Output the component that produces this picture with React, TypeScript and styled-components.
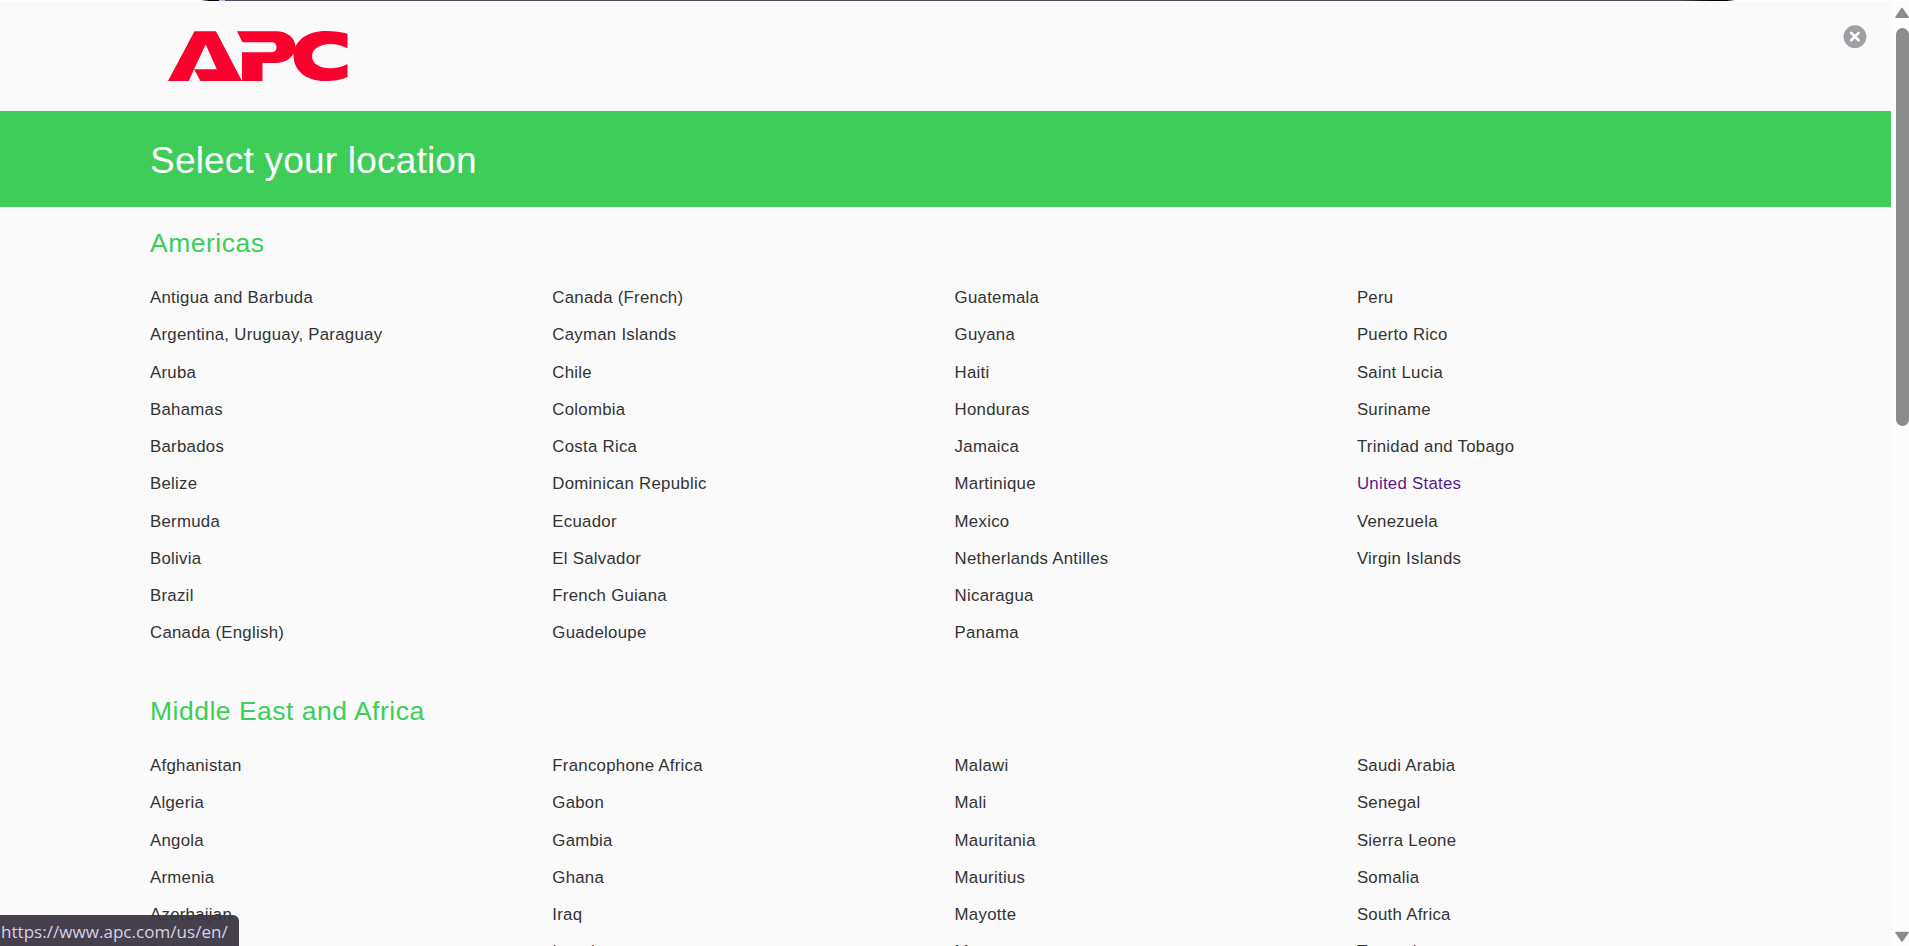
import React from "react";
import styled, { createGlobalStyle } from "styled-components";

const GlobalStyle = createGlobalStyle`
  * { box-sizing: border-box; }
  html, body { margin: 0; height: 100%; overflow: hidden; }
  body { background: #fafafa; font-family: "Liberation Sans", Arial, sans-serif; color: #333; }
`;

const Window = styled.div`
  position: relative;
  display: flex;
  height: 946px;
  overflow: hidden;
`;

const Page = styled.div`
  flex: 1;
  min-width: 0;
  overflow: hidden;
  background: #fafafa;
`;

const TopEdge = styled.div`
  position: absolute;
  top: 0;
  left: 0;
  width: 100%;
  height: 1px;
  background: linear-gradient(
    to right,
    #fff 201px, #000 209px, #000 219px, #cbb2f5 219px, #cbb2f5 225px,
    #51475a 225px, #51475a 1680px, #000 1712px, #000 1727px, #fff 1735px
  );
`;

const Header = styled.header`
  display: flex;
  justify-content: space-between;
  align-items: flex-start;
  height: 111px;
  padding: 25px 24px 0 168px;
`;

const Logo = styled.svg`
  display: block;
  margin-top: 6px;
`;

const CloseButton = styled.button`
  display: block;
  padding: 0;
  border: 0;
  background: none;
  line-height: 0;
`;

const Banner = styled.div`
  display: flex;
  align-items: center;
  height: 96px;
  padding: 3px 0 0 150px;
  background: #3dcd58;
`;

const Title = styled.h1`
  margin: 0;
  font-size: 37px;
  font-weight: 400;
  letter-spacing: 0.2px;
  color: #fff;
`;

const Region = styled.section`
  height: 468px;
  padding: 18px 0 0 150px;
`;

const RegionTitle = styled.h2`
  margin: 0 0 18px;
  height: 36px;
  line-height: 36px;
  font-size: 26.5px;
  font-weight: 400;
  letter-spacing: 0.5px;
  color: #3dcd58;
`;

const Columns = styled.div`
  display: grid;
  grid-template-columns: repeat(4, 402.3px);
`;

const CountryList = styled.ul`
  margin: 0;
  padding: 0;
  list-style: none;
`;

const Country = styled.li`
  height: 37.25px;
  line-height: 37.25px;
  white-space: nowrap;
`;

const CountryLink = styled.a<{ $visited?: boolean }>`
  font-size: 16.8px;
  letter-spacing: 0.28px;
  text-decoration: none;
  color: ${(p) => (p.$visited ? "#551a8b" : "#333")};
`;

const Scrollbar = styled.div`
  display: flex;
  flex-direction: column;
  align-items: flex-end;
  width: 18px;
  padding: 7px 0 3px;
  background: #fcfcfc;
`;

const Thumb = styled.div`
  width: 13px;
  height: 398px;
  margin: 9px 0 auto;
  border-radius: 7px;
  background: #8b8b8b;
`;

const StatusBar = styled.div`
  position: absolute;
  left: 0;
  bottom: 0;
  display: flex;
  align-items: center;
  width: 239px;
  height: 31px;
  padding: 2px 0 0 1px;
  border-top-right-radius: 6px;
  background: rgba(60, 54, 67, 0.95);
  font-family: "Open Sans", "Noto Sans", sans-serif;
  font-size: 17px;
  letter-spacing: 0.04px;
  color: #d9cfe8;
  white-space: nowrap;
`;

const regions = [
  {
    name: "Americas",
    columns: [
      ["Antigua and Barbuda", "Argentina, Uruguay, Paraguay", "Aruba", "Bahamas", "Barbados", "Belize", "Bermuda", "Bolivia", "Brazil", "Canada (English)"],
      ["Canada (French)", "Cayman Islands", "Chile", "Colombia", "Costa Rica", "Dominican Republic", "Ecuador", "El Salvador", "French Guiana", "Guadeloupe"],
      ["Guatemala", "Guyana", "Haiti", "Honduras", "Jamaica", "Martinique", "Mexico", "Netherlands Antilles", "Nicaragua", "Panama"],
      ["Peru", "Puerto Rico", "Saint Lucia", "Suriname", "Trinidad and Tobago", "United States", "Venezuela", "Virgin Islands"],
    ],
  },
  {
    name: "Middle East and Africa",
    columns: [
      ["Afghanistan", "Algeria", "Angola", "Armenia", "Azerbaijan", "Bahrain"],
      ["Francophone Africa", "Gabon", "Gambia", "Ghana", "Iraq", "Israel"],
      ["Malawi", "Mali", "Mauritania", "Mauritius", "Mayotte", "Morocco"],
      ["Saudi Arabia", "Senegal", "Sierra Leone", "Somalia", "South Africa", "Tanzania"],
    ],
  },
];

export default function App() {
  return (
    <Window>
      <GlobalStyle />
      <Page>
        <Header>
          <Logo width="180" height="50" viewBox="0 0 180 50" fill="#fa002d" aria-label="APC">
            <path fillRule="evenodd" d="M26.5 .3H48L74 50H32.5L26 38.2L20.8 50H0ZM37.7 13.5L26 38.2H48.8Z" />
            <path d="M69 .3H108C119 .3 126.5 6.5 127.3 14.5C127.7 25 119 32 107 32H94.5V50H74V21.2H103C107 21.2 108.5 19.5 108.5 16.3C108.5 13 107 11.3 103 11.3H74.5Z" />
            <path d="M179.5 2.8V17.3C174 14.5 168 13 162 13C152 13 144 18 144 25.3C144 33 152 37.2 162 37.2C168 37.2 174 36 179.5 33V46C173 49 166 50 157 50C138 50 125.5 39.5 125.5 24.5C125.5 10 139 0 158 0C166 0 173 .8 179.5 2.8Z" />
          </Logo>
          <CloseButton aria-label="Close">
            <svg width="24" height="24" viewBox="0 0 24 24">
              <circle cx="12" cy="11.7" r="11.4" fill="#9fa0a4" />
              <path d="M8.2 7.9L15.6 15.3M15.6 7.9L8.2 15.3" stroke="#fff" strokeWidth="2.7" strokeLinecap="round" />
            </svg>
          </CloseButton>
        </Header>
        <Banner>
          <Title>Select your location</Title>
        </Banner>
        {regions.map((region) => (
          <Region key={region.name}>
            <RegionTitle>{region.name}</RegionTitle>
            <Columns>
              {region.columns.map((column) => (
                <CountryList key={column[0]}>
                  {column.map((country) => (
                    <Country key={country}>
                      <CountryLink $visited={country === "United States"}>{country}</CountryLink>
                    </Country>
                  ))}
                </CountryList>
              ))}
            </Columns>
          </Region>
        ))}
      </Page>
      <Scrollbar>
        <svg width="14" height="12" viewBox="0 0 14 12">
          <path d="M7 1.5L13 10.3H1Z" fill="#8b8b8b" stroke="#8b8b8b" strokeWidth="1.6" strokeLinejoin="round" />
        </svg>
        <Thumb />
        <svg width="14" height="12" viewBox="0 0 14 12">
          <path d="M7 10L13 1.5H1Z" fill="#8b8b8b" stroke="#8b8b8b" strokeWidth="1.6" strokeLinejoin="round" />
        </svg>
      </Scrollbar>
      <TopEdge />
      <StatusBar>https://www.apc.com/us/en/</StatusBar>
    </Window>
  );
}
